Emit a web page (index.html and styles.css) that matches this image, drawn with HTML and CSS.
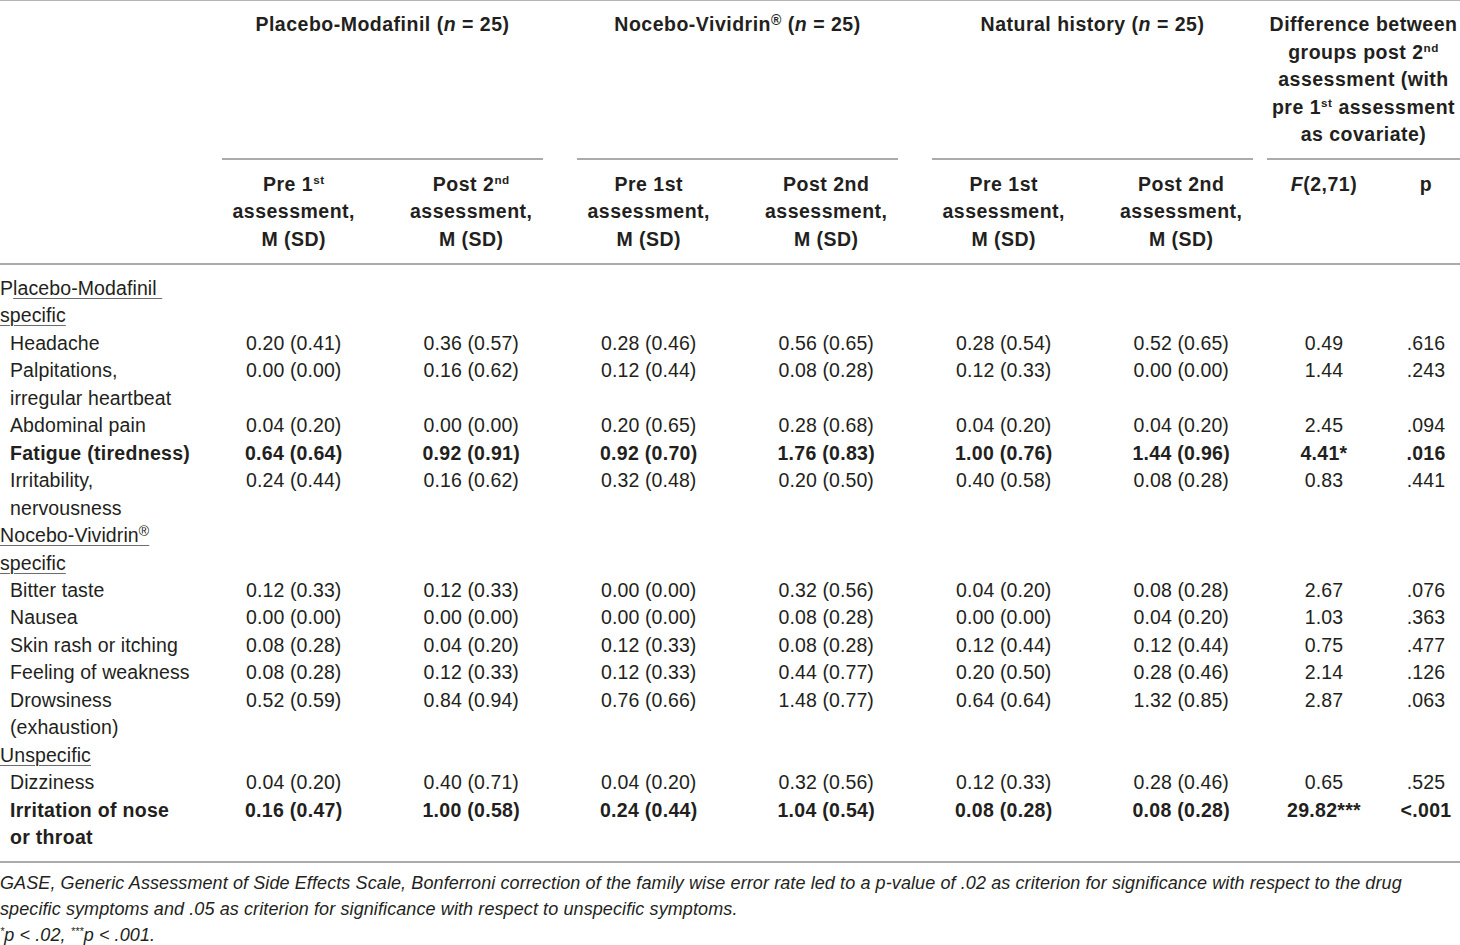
FILE: index.html
```html
<!DOCTYPE html>
<html lang="en">
<head>
<meta charset="utf-8">
<title>GASE side effects table</title>
<link rel="stylesheet" href="styles.css">
</head>
<body>
<div class="tbl">
  <div class="thead">
    <div class="grid grp-row">
      <div class="cell"></div>
      <div class="grp span2">Placebo-Modafinil (<i>n</i> = 25)</div>
      <div class="grp span2">Nocebo-Vividrin<sup class="reg">®</sup> (<i>n</i> = 25)</div>
      <div class="grp span2">Natural history (<i>n</i> = 25)</div>
      <div class="grp span2 last">Difference between<br>groups post 2<sup>nd</sup><br>assessment (with<br>pre 1<sup>st</sup> assessment<br>as covariate)</div>
    </div>
    <div class="grid sub-row">
      <div class="cell"></div>
      <div class="sub">Pre 1<sup>st</sup><br>assessment,<br>M (SD)</div>
      <div class="sub">Post 2<sup>nd</sup><br>assessment,<br>M (SD)</div>
      <div class="sub">Pre 1st<br>assessment,<br>M (SD)</div>
      <div class="sub">Post 2nd<br>assessment,<br>M (SD)</div>
      <div class="sub">Pre 1st<br>assessment,<br>M (SD)</div>
      <div class="sub">Post 2nd<br>assessment,<br>M (SD)</div>
      <div class="sub"><i>F</i>(2,71)</div>
      <div class="sub pcol">p</div>
    </div>
  </div>

  <div class="tbody">
    <div class="grid row"><div class="sect">P<u>lacebo-Modafinil&nbsp;</u><br><u>specific</u></div></div>
    <div class="grid row"><div class="lbl">Headache</div><div class="v">0.20 (0.41)</div><div class="v">0.36 (0.57)</div><div class="v">0.28 (0.46)</div><div class="v">0.56 (0.65)</div><div class="v">0.28 (0.54)</div><div class="v">0.52 (0.65)</div><div class="v">0.49</div><div class="v pcol">.616</div></div>
    <div class="grid row"><div class="lbl">Palpitations,<br>irregular heartbeat</div><div class="v">0.00 (0.00)</div><div class="v">0.16 (0.62)</div><div class="v">0.12 (0.44)</div><div class="v">0.08 (0.28)</div><div class="v">0.12 (0.33)</div><div class="v">0.00 (0.00)</div><div class="v">1.44</div><div class="v pcol">.243</div></div>
    <div class="grid row"><div class="lbl">Abdominal pain</div><div class="v">0.04 (0.20)</div><div class="v">0.00 (0.00)</div><div class="v">0.20 (0.65)</div><div class="v">0.28 (0.68)</div><div class="v">0.04 (0.20)</div><div class="v">0.04 (0.20)</div><div class="v">2.45</div><div class="v pcol">.094</div></div>
    <div class="grid row bold"><div class="lbl">Fatigue (tiredness)</div><div class="v">0.64 (0.64)</div><div class="v">0.92 (0.91)</div><div class="v">0.92 (0.70)</div><div class="v">1.76 (0.83)</div><div class="v">1.00 (0.76)</div><div class="v">1.44 (0.96)</div><div class="v">4.41*</div><div class="v pcol">.016</div></div>
    <div class="grid row"><div class="lbl">Irritability,<br>nervousness</div><div class="v">0.24 (0.44)</div><div class="v">0.16 (0.62)</div><div class="v">0.32 (0.48)</div><div class="v">0.20 (0.50)</div><div class="v">0.40 (0.58)</div><div class="v">0.08 (0.28)</div><div class="v">0.83</div><div class="v pcol">.441</div></div>

    <div class="grid row"><div class="sect"><u>Nocebo-Vividrin<sup class="reg">®</sup></u><br><u>specific</u></div></div>
    <div class="grid row"><div class="lbl">Bitter taste</div><div class="v">0.12 (0.33)</div><div class="v">0.12 (0.33)</div><div class="v">0.00 (0.00)</div><div class="v">0.32 (0.56)</div><div class="v">0.04 (0.20)</div><div class="v">0.08 (0.28)</div><div class="v">2.67</div><div class="v pcol">.076</div></div>
    <div class="grid row"><div class="lbl">Nausea</div><div class="v">0.00 (0.00)</div><div class="v">0.00 (0.00)</div><div class="v">0.00 (0.00)</div><div class="v">0.08 (0.28)</div><div class="v">0.00 (0.00)</div><div class="v">0.04 (0.20)</div><div class="v">1.03</div><div class="v pcol">.363</div></div>
    <div class="grid row"><div class="lbl">Skin rash or itching</div><div class="v">0.08 (0.28)</div><div class="v">0.04 (0.20)</div><div class="v">0.12 (0.33)</div><div class="v">0.08 (0.28)</div><div class="v">0.12 (0.44)</div><div class="v">0.12 (0.44)</div><div class="v">0.75</div><div class="v pcol">.477</div></div>
    <div class="grid row"><div class="lbl">Feeling of weakness</div><div class="v">0.08 (0.28)</div><div class="v">0.12 (0.33)</div><div class="v">0.12 (0.33)</div><div class="v">0.44 (0.77)</div><div class="v">0.20 (0.50)</div><div class="v">0.28 (0.46)</div><div class="v">2.14</div><div class="v pcol">.126</div></div>
    <div class="grid row"><div class="lbl">Drowsiness<br>(exhaustion)</div><div class="v">0.52 (0.59)</div><div class="v">0.84 (0.94)</div><div class="v">0.76 (0.66)</div><div class="v">1.48 (0.77)</div><div class="v">0.64 (0.64)</div><div class="v">1.32 (0.85)</div><div class="v">2.87</div><div class="v pcol">.063</div></div>

    <div class="grid row"><div class="sect"><u>Unspecific</u></div></div>
    <div class="grid row"><div class="lbl">Dizziness</div><div class="v">0.04 (0.20)</div><div class="v">0.40 (0.71)</div><div class="v">0.04 (0.20)</div><div class="v">0.32 (0.56)</div><div class="v">0.12 (0.33)</div><div class="v">0.28 (0.46)</div><div class="v">0.65</div><div class="v pcol">.525</div></div>
    <div class="grid row bold"><div class="lbl">Irritation of nose<br>or throat</div><div class="v">0.16 (0.47)</div><div class="v">1.00 (0.58)</div><div class="v">0.24 (0.44)</div><div class="v">1.04 (0.54)</div><div class="v">0.08 (0.28)</div><div class="v">0.08 (0.28)</div><div class="v">29.82***</div><div class="v pcol">&lt;.001</div></div>
  </div>

  <div class="notes">
    <p>GASE, Generic Assessment of Side Effects Scale, Bonferroni correction of the family wise error rate led to a p-value of .02 as criterion for significance with respect to the drug<br>specific symptoms and .05 as criterion for significance with respect to unspecific symptoms.</p>
    <p><sup>*</sup>p &lt; .02, <sup>***</sup>p &lt; .001.</p>
  </div>
</div>
</body>
</html>
```

FILE: styles.css
```css
html, body {
  margin: 0;
  padding: 0;
  background: #ffffff;
}

body {
  font-family: "Liberation Sans", Arial, sans-serif;
  font-size: 19.5px;
  letter-spacing: 0.1px;
  color: #231f20;
  width: 1460px;
}

.tbl {
  width: 1460px;
}

.grid {
  display: grid;
  grid-template-columns: 205px repeat(6, 177.5px) 108px 1fr;
}

sup {
  font-size: 0.6em;
  line-height: 0;
  vertical-align: 0.6em;
}

sup.reg {
  font-size: 0.72em;
  vertical-align: 0.45em;
}

/* header */
.thead {
  border-top: 1px solid #b4b4b4;
  border-bottom: 2px solid #ababab;
  font-weight: bold;
  letter-spacing: 0.5px;
  line-height: 27.5px;
  text-align: center;
}

.grp {
  margin: 0 17px;
  padding: 10px 0 9px;
  border-bottom: 2px solid #ababab;
  white-space: nowrap;
}

.grp.last {
  margin: 0 0 0 -3px;
}

.span2 {
  grid-column: span 2;
}

.sub {
  padding: 11px 0 10px;
  white-space: nowrap;
}

.pcol {
  padding-left: 14px;
}

/* body */
.tbody {
  padding: 10px 0 9px;
  border-bottom: 2px solid #ababab;
  line-height: 27.45px;
}

.sect {
  white-space: nowrap;
}

.sect u {
  text-decoration-color: #6d6d6d;
  text-decoration-thickness: 1px;
  text-underline-offset: 3px;
}

.lbl {
  padding-left: 10px;
  white-space: nowrap;
}

.v {
  text-align: center;
  white-space: nowrap;
}

.bold {
  font-weight: bold;
  letter-spacing: 0.3px;
}

/* notes */
.notes {
  padding-top: 7px;
  font-size: 18px;
  letter-spacing: 0.1px;
  font-style: italic;
  line-height: 26px;
}

.notes p {
  margin: 0;
  white-space: nowrap;
}
```
